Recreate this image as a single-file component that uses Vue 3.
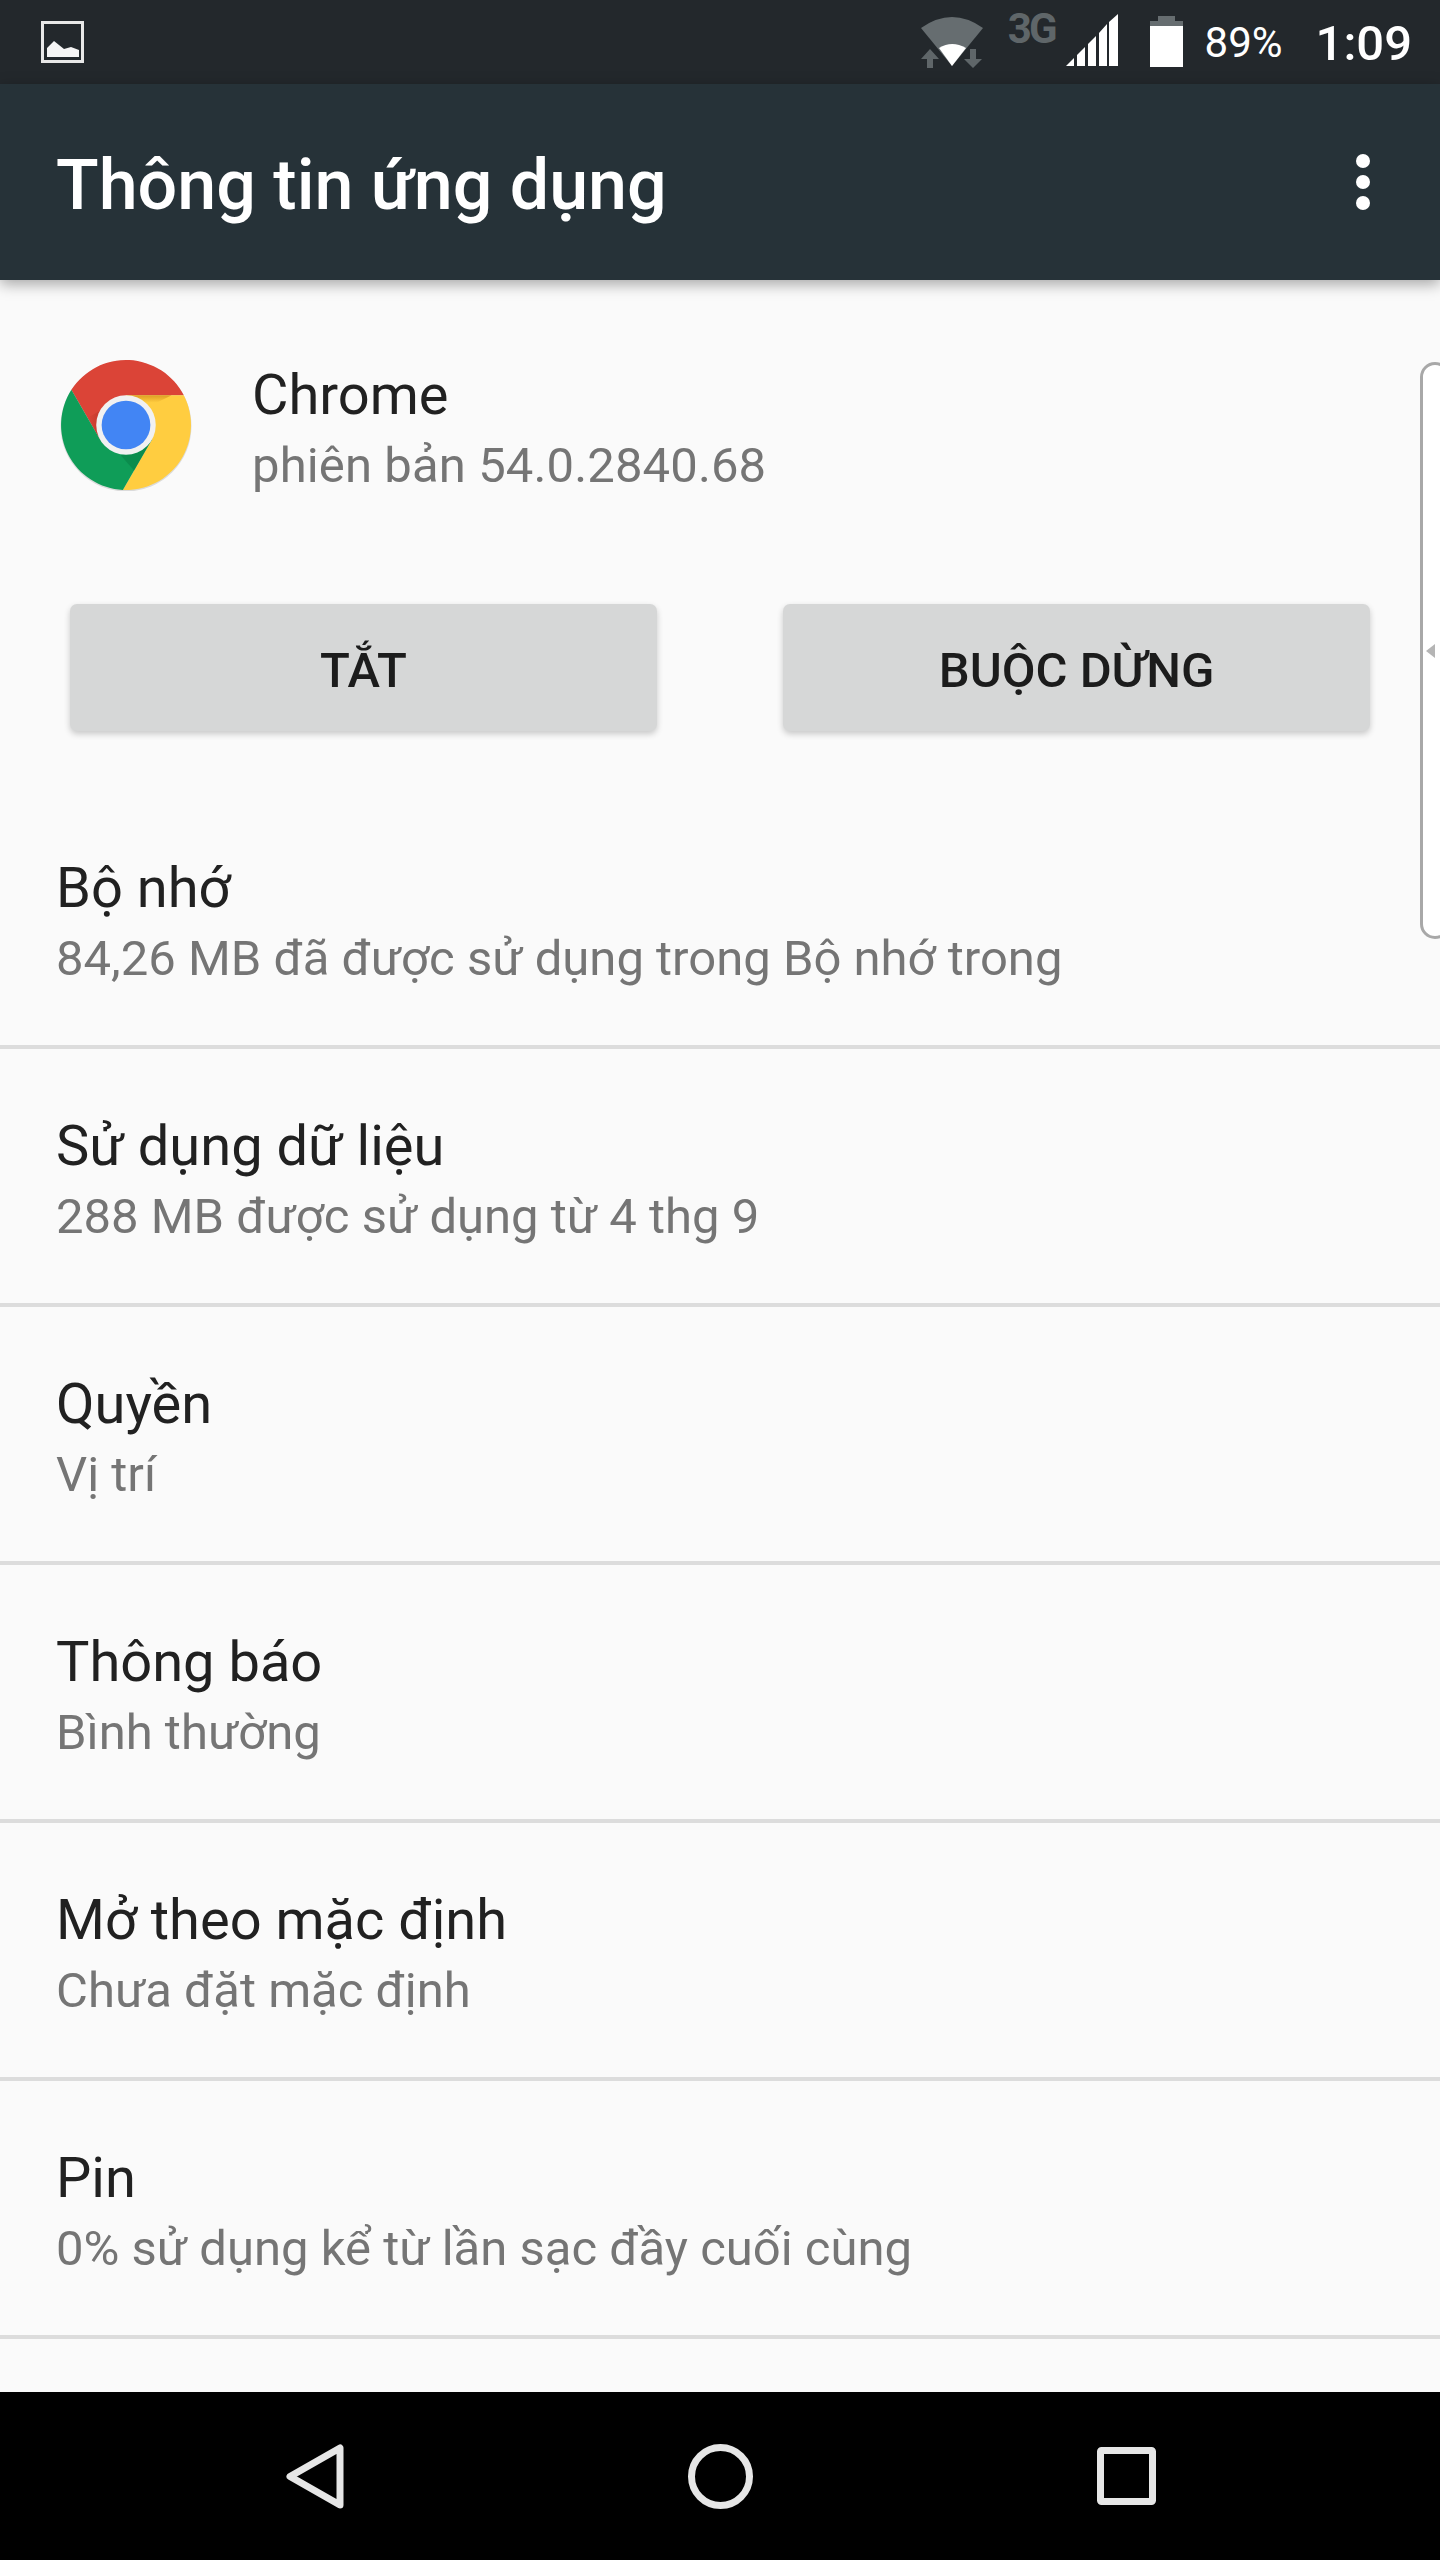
<template>
  <div class="phone">
    <div class="status-bar">
      <svg class="notif-icon" width="43" height="42" viewBox="0 0 43 42">
        <rect x="1.5" y="1.5" width="40" height="39" fill="none" stroke="#e8e8e8" stroke-width="3" />
        <path d="M6 27L13 20 23 28 30 26 38 29V36H6Z" fill="#f5f5f5" />
      </svg>
      <div class="status-right">
        <svg class="wifi" width="62" height="52" viewBox="0 0 62 52">
          <path d="M0 11Q31 -11 62 11L31 49Z" fill="#666d70" />
          <path d="M18 31Q31 23 45 31L31 49Z" fill="#fff" />
          <path d="M0 42L9 32L18 42H12V51H6V42Z" fill="#5f6669" />
          <path d="M49 32H55V42H61L52 51L43 42H49Z" fill="#5f6669" />
        </svg>
        <span class="net">3G</span>
        <svg class="signal" width="52" height="52" viewBox="0 0 52 52">
          <path d="M0 52L8 44V52Z M11 41L19 33V52H11Z M22 30L30 22V52H22Z M33 19L41 10V52H33Z M43 8L52 0V52H43Z" fill="#fff" />
        </svg>
        <svg class="battery" width="33" height="51" viewBox="0 0 33 51">
          <path d="M8 0H25V5H33V10H0V5H8Z" fill="#666d70" />
          <rect y="10" width="33" height="41" fill="#fff" />
        </svg>
        <span class="percent">89%</span>
        <span class="clock">1:09</span>
      </div>
    </div>

    <header class="toolbar">
      <h1 class="toolbar-title">Thông tin ứng dụng</h1>
      <div class="more"><i></i><i></i><i></i></div>
    </header>

    <main class="content">
      <section class="app-head">
        <svg class="chrome" width="132" height="132" viewBox="-65 -65 130 130">
          <defs>
            <linearGradient id="redShade" x1="0" y1="0" x2="1" y2="0">
              <stop offset="0" stop-color="#8a1f12" stop-opacity="0" />
              <stop offset="1" stop-color="#8a1f12" stop-opacity="0.45" />
            </linearGradient>
            <linearGradient id="yellowShade" x1="0" y1="0" x2="0" y2="1">
              <stop offset="0" stop-color="#c77f10" stop-opacity="0.6" />
              <stop offset="1" stop-color="#c77f10" stop-opacity="0" />
            </linearGradient>
          </defs>
          <circle r="64.5" cy="1" fill="#000" opacity="0.12" />
          <path d="M-53.8-34.6A64 64 0 0 1 56.9-29.3L0-29.3 0 0-25.4 14.6Z" fill="#db4437" />
          <path d="M56.9-29.3A64 64 0 0 1-3.1 63.9L25.4 14.6 0 0 0-29.3Z" fill="#ffcd40" />
          <path d="M-3.1 63.9A64 64 0 0 1-53.8-34.6L-25.4 14.6 0 0 25.4 14.6Z" fill="#0f9d58" />
          <path d="M-25.4 14.6L-38-7.2-22-16-18 0Z" fill="url(#redShade)" />
          <path d="M0-29.3H45L30-22H0Z" fill="url(#yellowShade)" />
          <path d="M25.4 14.6L8 44.8-5 30 10 20Z" fill="#0a7d45" opacity="0.55" />
          <circle r="29.3" fill="#f1f1f1" />
          <circle r="24" fill="#4285f4" />
        </svg>
        <div class="app-info">
          <div class="app-name">Chrome</div>
          <div class="app-version">phiên bản 54.0.2840.68</div>
        </div>
      </section>

      <section class="actions">
        <div class="btn">TẮT</div>
        <div class="btn">BUỘC DỪNG</div>
      </section>

      <section class="list">
        <div v-for="item in items" :key="item.title" class="row">
          <div class="row-title">{{ item.title }}</div>
          <div class="row-sub">{{ item.sub }}</div>
        </div>
      </section>

      <!-- edge handle sitting over the list -->
      <div class="edge-handle"><span class="edge-arrow"></span></div>
    </main>

    <nav class="nav-bar">
      <svg width="58" height="65" viewBox="0 0 58 65">
        <path d="M54 4V61L4 32.5Z" fill="none" stroke="#e6e6e6" stroke-width="7" stroke-linejoin="round" />
      </svg>
      <svg width="65" height="65" viewBox="0 0 65 65">
        <circle cx="32.5" cy="32.5" r="29" fill="none" stroke="#e6e6e6" stroke-width="7" />
      </svg>
      <svg width="59" height="58" viewBox="0 0 59 58">
        <rect x="3.5" y="3.5" width="52" height="51" rx="1" fill="none" stroke="#e6e6e6" stroke-width="7" />
      </svg>
    </nav>
  </div>
</template>

<script setup>
const items = [
  { title: 'Bộ nhớ', sub: '84,26 MB đã được sử dụng trong Bộ nhớ trong' },
  { title: 'Sử dụng dữ liệu', sub: '288 MB được sử dụng từ 4 thg 9' },
  { title: 'Quyền', sub: 'Vị trí' },
  { title: 'Thông báo', sub: 'Bình thường' },
  { title: 'Mở theo mặc định', sub: 'Chưa đặt mặc định' },
  { title: 'Pin', sub: '0% sử dụng kể từ lần sạc đầy cuối cùng' }
]
</script>

<style scoped>
.phone {
  width: 1440px;
  height: 2560px;
  display: flex;
  flex-direction: column;
  overflow: hidden;
  background: #fafafa;
  font-family: Roboto, "Noto Sans", sans-serif;
}

.status-bar {
  height: 84px;
  flex: none;
  background: #23282c;
  display: flex;
  justify-content: space-between;
  padding: 21px 28px 0 41px;
  box-sizing: border-box;
  color: #fff;
}

.notif-icon {
  display: block;
}

.status-right {
  display: flex;
  align-items: flex-start;
  margin-top: -21px;
  height: 84px;
}

.wifi {
  margin-top: 17px;
}

.net {
  margin: 5px 0 0 25px;
  font-size: 42px;
  line-height: 48px;
  font-weight: 700;
  color: #5f6669;
  letter-spacing: -3px;
}

.signal {
  margin: 14px 0 0 11px;
}

.battery {
  margin: 16px 0 0 32px;
}

.percent {
  margin: 18px 0 0 22px;
  font-size: 42px;
  line-height: 50px;
}

.clock {
  margin: 15px 0 0 33px;
  font-size: 49px;
  line-height: 58px;
  font-weight: 500;
}

.toolbar {
  height: 196px;
  flex: none;
  background: #263238;
  display: flex;
  align-items: center;
  justify-content: space-between;
  padding: 0 70px 0 56px;
  box-shadow: 0 4px 14px rgba(0, 0, 0, 0.35);
  position: relative;
  z-index: 1;
}

.toolbar-title {
  margin: 6px 0 0;
  font-size: 70px;
  font-weight: 500;
  color: #fff;
}

.more {
  display: flex;
  flex-direction: column;
  gap: 7px;
}

.more i {
  width: 14px;
  height: 14px;
  border-radius: 50%;
  background: #fff;
}

.content {
  flex: 1;
  position: relative;
  overflow: hidden;
}

.app-head {
  display: flex;
  padding: 79px 0 0 60px;
  height: 195px;
  box-sizing: border-box;
}

.chrome {
  display: block;
}

.app-info {
  margin-left: 60px;
}

.app-name {
  font-size: 56px;
  line-height: 76px;
  margin-top: -2px;
  color: #212121;
}

.app-version {
  font-size: 49px;
  line-height: 66px;
  letter-spacing: 0.12px;
  color: #757575;
}

.actions {
  display: flex;
  justify-content: space-between;
  padding: 129px 70px 0;
}

.btn {
  width: 587px;
  height: 127px;
  padding-top: 6px;
  box-sizing: border-box;
  background: #d6d7d7;
  border-radius: 7px;
  box-shadow: 0 3px 6px rgba(0, 0, 0, 0.2);
  display: flex;
  align-items: center;
  justify-content: center;
  font-size: 49px;
  font-weight: 500;
  color: #1c1c1c;
}

.list {
  margin-top: 60px;
}

.row {
  height: 258px;
  box-sizing: border-box;
  padding: 59px 0 0 56px;
  border-bottom: 4px solid #dcdcdc;
}

.row-title {
  font-size: 56px;
  line-height: 76px;
  color: #212121;
}

.row-sub {
  font-size: 49px;
  line-height: 66px;
  color: #757575;
}

.edge-handle {
  position: absolute;
  top: 82px;
  right: -10px;
  width: 30px;
  height: 577px;
  background: #fff;
  border: 3px solid #a8a8a8;
  border-radius: 20px;
  box-sizing: border-box;
}

.edge-arrow {
  position: absolute;
  left: 3px;
  top: 279px;
  border-style: solid;
  border-width: 7px 9px 7px 0;
  border-color: transparent #b5b5b5 transparent transparent;
}

.nav-bar {
  height: 168px;
  flex: none;
  background: #000;
  position: relative;
  z-index: 1;
  display: flex;
  align-items: center;
  padding-left: 286px;
  gap: 344px;
}
</style>

<style>
html,
body {
  margin: 0;
}
</style>
